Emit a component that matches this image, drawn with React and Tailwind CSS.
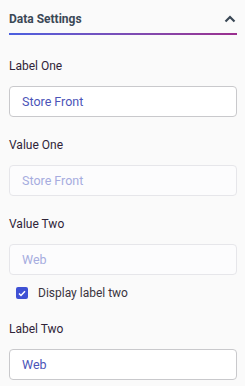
import React, { useState } from 'react';

const Field = ({ label, value, disabled, className = '' }) => (
  <div className={className}>
    <div className="text-[12px] leading-[20px] text-[#2f2438]">{label}</div>
    <input
      defaultValue={value}
      disabled={disabled}
      className={
        'mt-[10px] block w-full h-[31px] rounded-[4px] border px-[12px] text-[12.5px] outline-none ' +
        (disabled
          ? 'border-[#e6e6ea] bg-[#fcfcfd] text-[#a6acdf]'
          : 'border-[#c9c9cc] bg-white text-[#4b54b8]')
      }
    />
  </div>
);

const App = () => {
  const [checked, setChecked] = useState(true);

  return (
    <div className="w-[245px] h-[386px] bg-[#fafafa] px-[9px] pr-[8px] font-['Roboto',sans-serif] overflow-hidden">
      <div className="flex items-center justify-between pt-[9px] h-[29px]">
        <span className="text-[12px] font-bold leading-[20px] text-[#3b4856]">Data Settings</span>
        <svg width="12" height="8" viewBox="0 0 12 8" className="mr-[1px]">
          <path d="M1.5 6.5 L6 2 L10.5 6.5" fill="none" stroke="#3b4856" strokeWidth="2.2" />
        </svg>
      </div>
      <div className="mt-[4px] h-[2px] bg-gradient-to-r from-[#4a5fe0] to-[#9a2e8e]" />

      <Field label="Label One" value="Store Front" className="mt-[21px]" />
      <Field label="Value One" value="Store Front" disabled className="mt-[18px]" />
      <Field label="Value Two" value="Web" disabled className="mt-[18px]" />

      <label className="mt-[8px] flex items-center h-[20px] pl-[7px] gap-[10px] cursor-pointer">
        <span
          onClick={() => setChecked(!checked)}
          className={
            'flex items-center justify-center w-[12px] h-[12px] rounded-[2px] ' +
            (checked ? 'bg-[#3f51d4]' : 'border border-[#9a9a9a] bg-white')
          }
        >
          {checked && (
            <svg width="8" height="7" viewBox="0 0 8 7">
              <path d="M1 3.5 L3 5.5 L7 1.2" fill="none" stroke="white" strokeWidth="1.5" />
            </svg>
          )}
        </span>
        <span className="text-[12px] text-[#3a3440]">Display label two</span>
      </label>

      <Field label="Label Two" value="Web" className="mt-[16px]" />
    </div>
  );
};

export default App;
